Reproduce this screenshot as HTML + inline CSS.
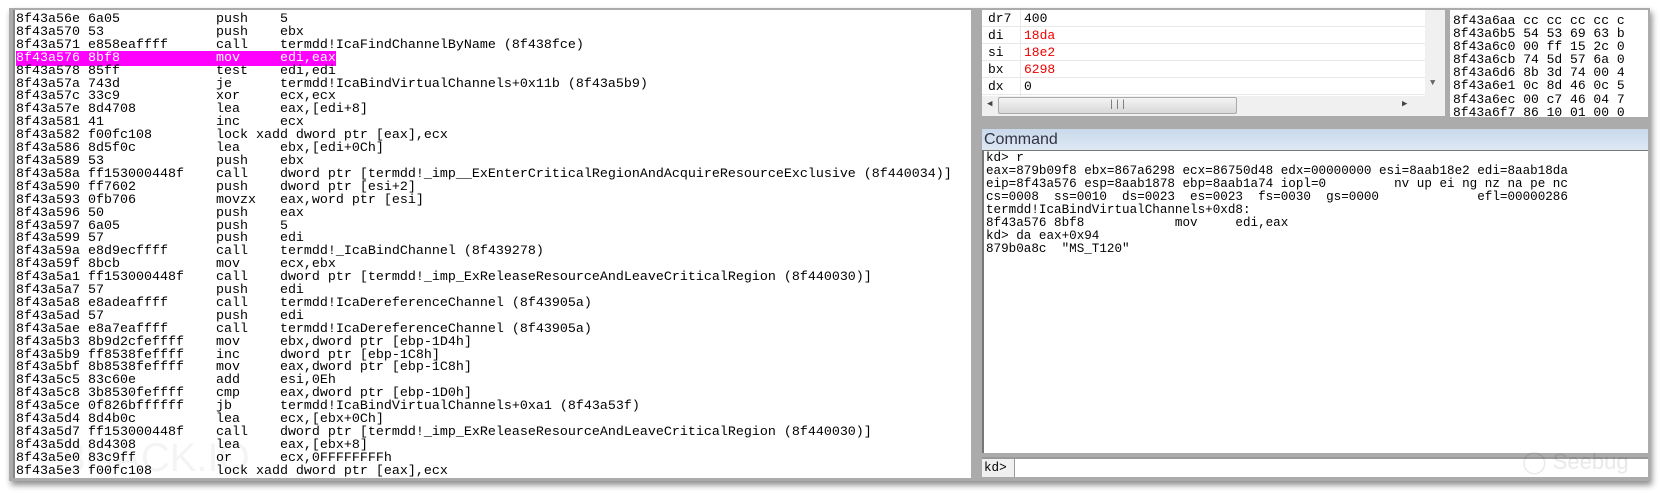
<!DOCTYPE html>
<html><head><meta charset="utf-8"><style>
*{margin:0;padding:0;box-sizing:border-box}
body{width:1660px;height:493px;background:#fff;position:relative;overflow:hidden;font-family:"Liberation Mono",monospace}
.frame{position:absolute;left:9px;top:8px;width:1641px;height:473px;background:#ababab;box-shadow:2px 4px 6px rgba(0,0,0,.45)}
.pane{position:absolute;background:#fff}
pre{font-family:"Liberation Mono",monospace;white-space:pre;color:#000}
#list{left:13px;top:10px;width:958px;height:468px;border-left:2px solid #888;overflow:hidden}
#list pre{font-size:13.33px;line-height:12.9px;padding:4px 0 0 1px}
.hl{background:#ff00ff;color:#fff}
#regs{left:982px;top:10px;width:463px;height:106px;overflow:hidden}
.row{position:absolute;left:0;width:443px;height:17px;border-bottom:1px solid #e8e8e8;font-size:13px;line-height:17px}
.row span{position:absolute}
.red{color:#e00}
#mem{left:1450px;top:10px;width:198px;height:107px;overflow:hidden}
#mem pre{font-size:13px;line-height:13.1px;padding:4px 0 0 3px}
#hdr{position:absolute;left:982px;top:129px;width:666px;height:21px;background:linear-gradient(#c9d9ea,#dde8f3);font-family:"Liberation Sans",sans-serif;font-size:16px;line-height:21px;color:#334;padding-left:2px}
#cmd{left:982px;top:150px;width:666px;height:303px;border-left:2px solid #777;border-top:1px solid #777}
#cmd pre{font-size:12.6px;line-height:13px;padding:1px 0 0 2px}
#inp{position:absolute;left:982px;top:457px;width:666px;height:20px;background:#fff;border-top:2px solid #999}
#inp .p{position:absolute;left:0;top:0;width:33px;height:18px;background:#f0f0f0;border-right:1px solid #999;font-size:12.6px;line-height:18px;padding-left:2px}
</style></head><body>
<div class="frame"></div>
<div class="pane" id="list"><pre>8f43a56e 6a05            push    5
8f43a570 53              push    ebx
8f43a571 e858eaffff      call    termdd!IcaFindChannelByName (8f438fce)
<span class="hl">8f43a576 8bf8            mov     edi,eax</span>
8f43a578 85ff            test    edi,edi
8f43a57a 743d            je      termdd!IcaBindVirtualChannels+0x11b (8f43a5b9)
8f43a57c 33c9            xor     ecx,ecx
8f43a57e 8d4708          lea     eax,[edi+8]
8f43a581 41              inc     ecx
8f43a582 f00fc108        lock xadd dword ptr [eax],ecx
8f43a586 8d5f0c          lea     ebx,[edi+0Ch]
8f43a589 53              push    ebx
8f43a58a ff153000448f    call    dword ptr [termdd!_imp__ExEnterCriticalRegionAndAcquireResourceExclusive (8f440034)]
8f43a590 ff7602          push    dword ptr [esi+2]
8f43a593 0fb706          movzx   eax,word ptr [esi]
8f43a596 50              push    eax
8f43a597 6a05            push    5
8f43a599 57              push    edi
8f43a59a e8d9ecffff      call    termdd!_IcaBindChannel (8f439278)
8f43a59f 8bcb            mov     ecx,ebx
8f43a5a1 ff153000448f    call    dword ptr [termdd!_imp_ExReleaseResourceAndLeaveCriticalRegion (8f440030)]
8f43a5a7 57              push    edi
8f43a5a8 e8adeaffff      call    termdd!IcaDereferenceChannel (8f43905a)
8f43a5ad 57              push    edi
8f43a5ae e8a7eaffff      call    termdd!IcaDereferenceChannel (8f43905a)
8f43a5b3 8b9d2cfeffff    mov     ebx,dword ptr [ebp-1D4h]
8f43a5b9 ff8538feffff    inc     dword ptr [ebp-1C8h]
8f43a5bf 8b8538feffff    mov     eax,dword ptr [ebp-1C8h]
8f43a5c5 83c60e          add     esi,0Eh
8f43a5c8 3b8530feffff    cmp     eax,dword ptr [ebp-1D0h]
8f43a5ce 0f826bffffff    jb      termdd!IcaBindVirtualChannels+0xa1 (8f43a53f)
8f43a5d4 8d4b0c          lea     ecx,[ebx+0Ch]
8f43a5d7 ff153000448f    call    dword ptr [termdd!_imp_ExReleaseResourceAndLeaveCriticalRegion (8f440030)]
8f43a5dd 8d4308          lea     eax,[ebx+8]
8f43a5e0 83c9ff          or      ecx,0FFFFFFFFh
8f43a5e3 f00fc108        lock xadd dword ptr [eax],ecx</pre>
<div style="position:absolute;left:48px;top:426px;font-family:'Liberation Sans',sans-serif;font-size:40px;color:rgba(0,0,0,.045)">8HACK.IO</div>
</div>
<div class="pane" id="regs">
<div class="row" style="top:0"><span style="left:6px">dr7</span><span style="left:42px">400</span></div>
<div class="row" style="top:17px"><span style="left:6px">di</span><span class="red" style="left:42px">18da</span></div>
<div class="row" style="top:34px"><span style="left:6px">si</span><span class="red" style="left:42px">18e2</span></div>
<div class="row" style="top:51px"><span style="left:6px">bx</span><span class="red" style="left:42px">6298</span></div>
<div class="row" style="top:68px"><span style="left:6px">dx</span><span style="left:42px">0</span></div>
<div style="position:absolute;left:38px;top:0;width:1px;height:86px;background:#e8e8e8"></div>
<div style="position:absolute;left:0;top:86px;width:463px;height:20px;background:#f0f0f0"></div>
<div style="position:absolute;left:16px;top:87px;width:239px;height:17px;border:1px solid #aaa;border-radius:2px;background:linear-gradient(#f4f4f4,#d8d8d8);font-size:10px;text-align:center;line-height:15px;color:#666">|||</div>
<div style="position:absolute;left:5px;top:89px;font-size:9px;color:#444">◀</div>
<div style="position:absolute;left:420px;top:89px;font-size:9px;color:#444">▶</div>
<div style="position:absolute;left:443px;top:0;width:20px;height:86px;background:#f0f0f0"></div>
<div style="position:absolute;left:448px;top:68px;font-size:9px;color:#666">▼</div>
</div>
<div class="pane" id="mem"><pre>8f43a6aa cc cc cc cc c
8f43a6b5 54 53 69 63 b
8f43a6c0 00 ff 15 2c 0
8f43a6cb 74 5d 57 6a 0
8f43a6d6 8b 3d 74 00 4
8f43a6e1 0c 8d 46 0c 5
8f43a6ec 00 c7 46 04 7
8f43a6f7 86 10 01 00 0</pre></div>
<div id="hdr">Command</div>
<div class="pane" id="cmd"><pre>kd&gt; r
eax=879b09f8 ebx=867a6298 ecx=86750d48 edx=00000000 esi=8aab18e2 edi=8aab18da
eip=8f43a576 esp=8aab1878 ebp=8aab1a74 iopl=0         nv up ei ng nz na pe nc
cs=0008  ss=0010  ds=0023  es=0023  fs=0030  gs=0000             efl=00000286
termdd!IcaBindVirtualChannels+0xd8:
8f43a576 8bf8            mov     edi,eax
kd&gt; da eax+0x94
879b0a8c  "MS_T120"</pre></div>
<div id="inp"><div class="p">kd&gt;</div>
<div style="position:absolute;left:540px;top:-10px;font-family:'Liberation Sans',sans-serif;font-size:22px;color:rgba(0,0,0,.09)">◯ Seebug</div></div>
</body></html>
